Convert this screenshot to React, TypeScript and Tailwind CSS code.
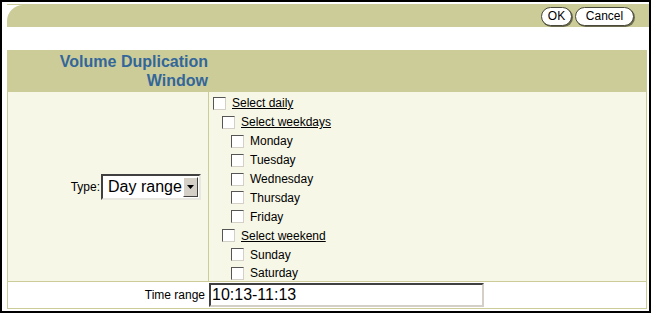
const days: { label: string; level: number; link?: boolean }[] = [
  { label: 'Select daily', level: 0, link: true },
  { label: 'Select weekdays', level: 1, link: true },
  { label: 'Monday', level: 2 },
  { label: 'Tuesday', level: 2 },
  { label: 'Wednesday', level: 2 },
  { label: 'Thursday', level: 2 },
  { label: 'Friday', level: 2 },
  { label: 'Select weekend', level: 1, link: true },
  { label: 'Sunday', level: 2 },
  { label: 'Saturday', level: 2 },
];

const indent = ['pl-[4px]', 'pl-[13px]', 'pl-[22px]'];

function Checkbox() {
  return (
    <span className="block w-[13px] h-[13px] shrink-0 bg-white border border-t-[#555] border-l-[#555] border-b-[#d4d0c8] border-r-[#d4d0c8]" />
  );
}

function PillButton({ label, width }: { label: string; width: string }) {
  return (
    <button
      type="button"
      className={`${width} h-[19px] rounded-full bg-white border border-[#4a4a3a] shadow-[1px_1px_0_#6b6b50] text-[12px] leading-none text-black flex items-center justify-center`}
    >
      {label}
    </button>
  );
}

export default function App() {
  return (
    <div className="w-[651px] h-[313px] border-2 border-black bg-white text-[12px] text-black font-['Liberation_Sans',Arial,sans-serif] overflow-hidden">
      {/* page header bar */}
      <div className="pl-[5px] pt-[2px]">
        <div className="border-t border-[#cccc99]">
          <div className="h-[22px] bg-[#cccc99] rounded-tl-[16px] flex items-center justify-end gap-[3px] pr-[15px]">
            <PillButton label="OK" width="w-[31px]" />
            <PillButton label="Cancel" width="w-[59px]" />
          </div>
        </div>
      </div>

      {/* form table */}
      <div className="ml-[5px] mt-[23px] w-[640px] border-x border-b border-[#cccc99]">
        <div className="h-[42px] bg-[#cccc99] flex">
          <div className="w-[200px] pt-[2px] text-right text-[16px] leading-[19px] font-bold text-[#336699]">
            Volume Duplication
            <br />
            Window
          </div>
        </div>

        <div className="flex h-[190px] bg-[#f7f7e7] border-b border-[#cccc99]">
          <div className="w-[201px] border-r border-[#cccc99] flex items-center justify-end pr-[7px]">
            <span className="mr-[1px]">Type:</span>
            <div className="w-[100px] h-[26px] bg-white border-2 border-t-[#404040] border-l-[#404040] border-b-[#e8e8e0] border-r-[#e8e8e0] flex items-center">
              <span className="flex-1 pl-[5px] text-[16px] leading-none">Day range</span>
              <span className="w-[15px] h-[20px] mr-[1px] bg-[#d4d0c8] border border-t-white border-l-white border-b-[#404040] border-r-[#404040] flex items-center justify-center">
                <svg width="7" height="4" viewBox="0 0 7 4">
                  <path d="M0 0h7L3.5 4z" fill="#000" />
                </svg>
              </span>
            </div>
          </div>
          <div className="flex-1 pt-[2px]">
            {days.map((d) => (
              <div key={d.label} className={`h-[18.9px] flex items-center gap-[6px] ${indent[d.level]}`}>
                <Checkbox />
                <span className={d.link ? 'underline' : ''}>{d.label}</span>
              </div>
            ))}
          </div>
        </div>

        <div className="flex h-[26px] items-center">
          <div className="w-[201px] text-right pr-[4px]">Time range</div>
          <div className="w-[275px] h-[24px] bg-white border-2 border-t-[#404040] border-l-[#404040] border-b-[#d4d0c8] border-r-[#d4d0c8] flex items-center pl-[1px] text-[16px] leading-none">
            10:13-11:13
          </div>
        </div>
      </div>
    </div>
  );
}
